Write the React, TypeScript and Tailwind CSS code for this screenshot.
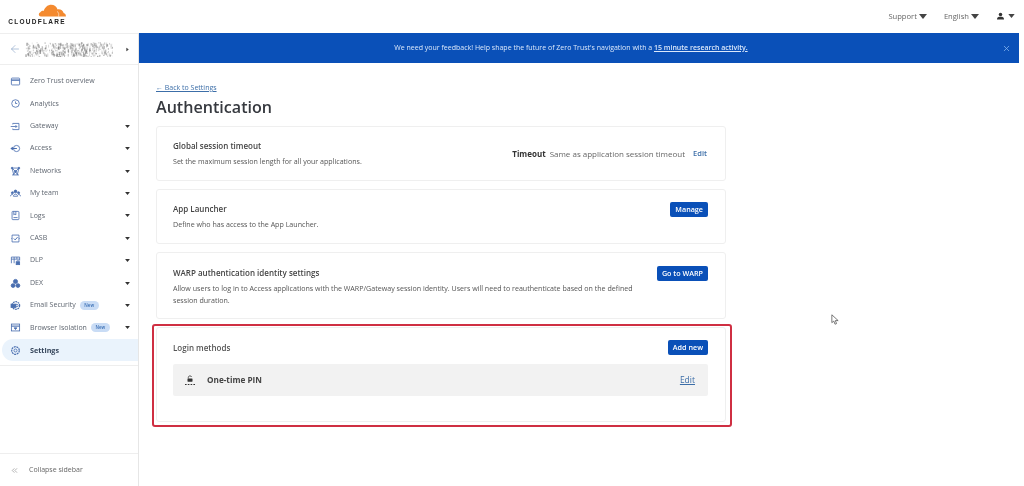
import React from "react";
import { ArrowLeft, ChevronsLeft, X } from "lucide-react";

const Caret = ({ className = "" }: { className?: string }) => (
  <svg viewBox="0 0 8 5" className={className} fill="currentColor">
    <path d="M0 0h8L4 5z" />
  </svg>
);

const icons: Record<string, React.ReactNode> = {
  overview: (
    <>
      <rect x="2" y="3" width="12" height="10" rx="1" />
      <path d="M2 6h12" strokeWidth="2" />
    </>
  ),
  analytics: (
    <>
      <circle cx="8" cy="8" r="5.5" />
      <path d="M8 5v3h2.5" />
    </>
  ),
  gateway: (
    <>
      <path d="M4 5V3.5h9v9H4V11" />
      <path d="M1 8h9M8 6l2 2-2 2" />
    </>
  ),
  access: (
    <>
      <circle cx="9.5" cy="8" r="4.5" />
      <path d="M1 8h9M4 6 2 8l2 2" strokeWidth="1.6" />
    </>
  ),
  networks: (
    <>
      <path d="M3 3h10M3 13h10M3 3l2.5 10M13 3l-2.5 10M3 3l5 5 5-5M5 13l3-5 3 5" />
      <circle cx="3" cy="3" r="1.2" fill="#4a6fb0" />
      <circle cx="13" cy="3" r="1.2" fill="#4a6fb0" />
      <circle cx="8" cy="8" r="1.4" fill="#4a6fb0" />
    </>
  ),
  team: (
    <>
      <circle cx="8" cy="5" r="2" fill="#4a6fb0" />
      <circle cx="3.5" cy="7" r="1.5" fill="#4a6fb0" />
      <circle cx="12.5" cy="7" r="1.5" fill="#4a6fb0" />
      <path d="M5 12c0-4 6-4 6 0zM.8 12c0-3 3-3 3.4-2M15.2 12c0-3-3-3-3.4-2" />
    </>
  ),
  logs: (
    <>
      <rect x="3" y="2" width="10" height="12" rx="1" />
      <path d="M5.5 2v5l1.5-1 1.500 1V2M5 11h6" />
    </>
  ),
  casb: (
    <>
      <path d="M3 5V3h10v2M3 11v2h10v-2M2 8h1M13 8h1M3 5v6M13 5v6" />
      <path d="m5.500 8 2 2 3.500-4" strokeWidth="1.400" />
    </>
  ),
  dlp: (
    <>
      <path d="M2 12V3h12v5" />
      <path d="M2 6h12M6 3v9M10 3v3" />
      <rect x="9" y="10" width="5" height="4" fill="#4a6fb0" />
      <path d="M10 10V8.500h3V10" />
    </>
  ),
  dex: (
    <>
      <circle cx="8" cy="5" r="3" fill="#4a6fb0" />
      <circle cx="4.500" cy="11" r="2.800" fill="#4a6fb0" />
      <circle cx="11.500" cy="11" r="2.800" fill="#4a6fb0" />
    </>
  ),
  email: (
    <>
      <circle cx="8.500" cy="8" r="5.500" strokeDasharray="2.500 1" strokeWidth="1.800" />
      <rect x="1.500" y="6" width="7" height="5" fill="#4a6fb0" />
      <circle cx="10" cy="8" r="1.800" />
    </>
  ),
  browser: (
    <>
      <rect x="2" y="3" width="12" height="10" />
      <path d="M2 6h12" strokeWidth="1.600" />
      <path d="M6 8.500h4L8 11z" fill="#4a6fb0" />
    </>
  ),
  settings: (
    <>
      <circle cx="8" cy="8" r="5.500" strokeDasharray="2.800 1" strokeWidth="1.800" />
      <circle cx="8" cy="8" r="2.200" />
    </>
  ),
};

const NavIcon = ({ name }: { name: string }) => (
  <svg viewBox="0 0 16 16" className="w-[11px] h-[11px] shrink-0" fill="none" stroke="#4a6fb0" strokeWidth="1.200">
    {icons[name]}
  </svg>
);

const nav = [
  { icon: "overview", label: "Zero Trust overview" },
  { icon: "analytics", label: "Analytics" },
  { icon: "gateway", label: "Gateway", caret: true },
  { icon: "access", label: "Access", caret: true },
  { icon: "networks", label: "Networks", caret: true },
  { icon: "team", label: "My team", caret: true },
  { icon: "logs", label: "Logs", caret: true },
  { icon: "casb", label: "CASB", caret: true },
  { icon: "dlp", label: "DLP", caret: true },
  { icon: "dex", label: "DEX", caret: true },
  { icon: "email", label: "Email Security", caret: true, badge: true },
  { icon: "browser", label: "Browser Isolation", caret: true, badge: true },
];

// scribbled-out account name, a small LCG keeps it stable between runs
let seed = 11;
const rnd = () => {
  seed = (seed * 1103515245 + 12345) % 2147483648;
  return seed / 2147483648;
};
const scribble = Array.from({ length: 420 }, () => ({
  x: rnd() * 88,
  y: 1 + rnd() * 14,
  w: 0.6 + rnd(),
  h: 0.8 + rnd() * 2.4,
  o: 0.12 + rnd() * 0.5,
}));

function Card({ className = "", children }: { className?: string; children: React.ReactNode }) {
  return (
    <div className={`border border-[#efefef] rounded-[3px] bg-white pl-[16px] pr-[17px] ${className}`}>{children}</div>
  );
}

function Btn({ children }: { children: React.ReactNode }) {
  return (
    <button className="block h-[15px] px-[5px] rounded-[2px] bg-[#0a50b8] text-white text-[7.200px] font-semibold leading-none">
      {children}
    </button>
  );
}

export default function App() {
  return (
    <div className="w-[1024px] h-[486px] overflow-hidden bg-white text-[#555] flex flex-col blur-[0.35px] font-['Open_Sans',sans-serif]">
      <header className="h-[33px] shrink-0 flex items-center justify-between">
        <div className="ml-[8px] mt-[-5px] flex flex-col items-end w-[58px]">
          <svg viewBox="0 0 30 14" className="w-[28px] h-[13px] mb-[1px]">
            <path
              d="M3 13.500c-2.500 0-3-3.500-.5-4.500C3 7.500 5 7 6 7.500 7.500 3 11 .8 14 .8c3.500 0 6 2.200 7 5 3-.5 6 1.200 6.500 4 1.500.4 2.500 1.500 2.500 3.700z"
              fill="#f48a2f"
            />
            <path d="M22 13.500c.6-2.500.3-4.500-1.500-5.500" stroke="#fff" strokeWidth="0.600" fill="none" />
          </svg>
          <span className="text-[6.500px] font-['Liberation_Sans',sans-serif] font-bold tracking-[1.300px] leading-[7px] text-[#222]">
            CLOUDFLARE
          </span>
        </div>
        <div className="flex items-center text-[7.600px] text-[#666] mr-[9px]">
          <span>Support</span>
          <Caret className="w-[8px] h-[5px] ml-[2px] text-[#444]" />
          <span className="ml-[17px]">English</span>
          <Caret className="w-[8px] h-[5px] ml-[2px] text-[#444]" />
          <svg viewBox="0 0 10 10" className="w-[7px] h-[8px] ml-[18px] text-[#333]" fill="currentColor">
            <circle cx="5" cy="2.800" r="2.500" />
            <path d="M0 10c0-3.500 2-4 5-4s5 .5 5 4z" />
          </svg>
          <Caret className="w-[7px] h-[4px] ml-[4px] text-[#444]" />
        </div>
      </header>

      <div className="flex flex-1 min-h-0">
        <aside className="w-[139px] shrink-0 border-r border-[#e6e6e6] flex flex-col">
          <div className="h-[32px] shrink-0 border-y border-[#eeeeee] flex items-center pl-[9px] pr-[9px]">
            <ArrowLeft className="w-[12px] h-[12px] shrink-0 text-[#8aa4c8]" strokeWidth={1.300} />
            <svg viewBox="0 0 88 16" className="w-[88px] h-[16px] ml-[4px] shrink-0">
              {scribble.map((d, i) => (
                <rect key={i} x={d.x} y={d.y} width={d.w} height={d.h} fill="#777" opacity={d.o} />
              ))}
            </svg>
            <Caret className="w-[3px] h-[5px] ml-auto -rotate-90 scale-[1.300] text-[#444]" />
          </div>

          <nav className="pt-[5.300px] flex-1 border-b border-[#eeeeee] flex flex-col">
            {nav.map((n) => (
              <div key={n.label} className="h-[22.400px] shrink-0 flex items-center pl-[10px] pr-[8.500px] text-[7px] text-[#5f6670]">
                <NavIcon name={n.icon} />
                <span className="ml-[9px]">{n.label}</span>
                {n.badge && (
                  <span className="ml-[4px] w-[19px] text-center rounded-full bg-[#c9dcf5] text-[#3b6fb5] text-[4.500px] leading-[9px] font-semibold">
                    New
                  </span>
                )}
                {n.caret && <Caret className="w-[5px] h-[3px] ml-auto text-[#333]" />}
              </div>
            ))}
            <div className="h-[22.400px] shrink-0 ml-[2px] flex items-center pl-[8px] bg-[#eaf3fc] rounded-l-full text-[7.200px] font-bold text-[#36465c]">
              <NavIcon name="settings" />
              <span className="ml-[9px]">Settings</span>
            </div>
            <div className="h-[5px] border-b border-[#eeeeee]" />
          </nav>
          <div className="h-[32px] shrink-0 flex items-center pl-[10px] text-[7px] text-[#666]">
            <ChevronsLeft className="w-[9px] h-[9px] text-[#999]" />
            <span className="ml-[10px]">Collapse sidebar</span>
          </div>
        </aside>

        <main className="flex-1 min-w-0 flex flex-col">
          <div className="h-[30px] shrink-0 mr-[5px] bg-[#0a50b8] flex items-center text-[7px] text-[#dbe8fb] relative justify-center pr-[16px]">
            <span>
              We need your feedback! Help shape the future of Zero Trust's navigation with a{" "}
              <span className="underline font-semibold">15 minute research activity.</span>
            </span>
            <X className="absolute right-[8px] top-[10.500px] w-[9px] h-[9px] text-[#8ab8f0]" strokeWidth={2} />
          </div>

          <div className="pl-[17px] pt-[19px] w-[587px]">
            <div className="text-[7px] leading-[12px] text-[#3c6ea8] underline">← Back to Settings</div>
            <h1 className="text-[16.100px] leading-[24px] mt-[1px] font-semibold text-[#36393f]">Authentication</h1>

            <div className="flex flex-col gap-[8px] mt-[7px]">
              <Card className="h-[55px] flex items-center justify-between">
                <div>
                  <div className="text-[8px] font-semibold text-[#444]">Global session timeout</div>
                  <div className="text-[7.100px] mt-[4px] text-[#555]">Set the maximum session length for all your applications.</div>
                </div>
                <div className="flex items-center text-[8px] mr-[1px]">
                  <span className="font-bold text-[#333]">Timeout</span>
                  <span className="ml-[4px] text-[#666]">Same as application session timeout</span>
                  <span className="ml-[8px] text-[7.500px] font-semibold text-[#3c6ea8]">Edit</span>
                </div>
              </Card>

              <Card className="h-[55px] flex items-center justify-between">
                <div>
                  <div className="text-[8px] font-semibold text-[#444]">App Launcher</div>
                  <div className="text-[7.100px] mt-[4px] text-[#555]">Define who has access to the App Launcher.</div>
                </div>
                <div className="self-start mt-[12px]">
                  <Btn>Manage</Btn>
                </div>
              </Card>

              <Card className="h-[67px] pt-[13px]">
                <div className="flex items-center justify-between">
                  <div className="text-[8px] font-semibold text-[#444] -mt-[2px]">WARP authentication identity settings</div>
                  <Btn>Go to WARP</Btn>
                </div>
                <p className="text-[7.100px] leading-[11.500px] mt-[2px] text-[#555] w-[480px]">
                  Allow users to log in to Access applications with the WARP/Gateway session identity. Users will need to reauthenticate based on the defined session duration.
                </p>
              </Card>

              <Card className="h-[95px] pt-[12px] relative">
                <div className="flex items-center justify-between">
                  <div className="text-[8px] font-semibold text-[#555]">Login methods</div>
                  <Btn>Add new</Btn>
                </div>
                <div className="mt-[9px] h-[32px] bg-[#f2f2f2] rounded-[2px] flex items-center pl-[11px] pr-[13px]">
                  <svg viewBox="0 0 12 12" className="w-[12px] h-[13px] text-[#333]" fill="currentColor">
                    <path d="M4.300 4V3a1.700 1.700 0 0 1 3.300-.5" fill="none" stroke="currentColor" strokeWidth="0.800" />
                    <rect x="3.500" y="4" width="5" height="3.200" rx="0.400" />
                    <path d="M1 10.500h1.600v-.9H1zM3.800 10.500h1.600v-.9H3.800zM6.600 10.500h1.600v-.9H6.600zM9.400 10.500H11v-.9H9.400z" />
                  </svg>
                  <span className="ml-[11px] text-[8.200px] font-bold text-[#444]">One-time PIN</span>
                  <span className="ml-auto text-[8.500px] text-[#3c6ea8] underline">Edit</span>
                </div>
                {/* red highlight drawn over the card */}
                <div className="absolute -left-[5px] -top-[4px] w-[580px] h-[103px] border-2 border-[#cf2f42] rounded-[3px]" />
              </Card>
            </div>
          </div>
          {/* mouse pointer */}
          <svg viewBox="0 0 10 14" className="absolute left-[831px] top-[314px] w-[8px] h-[11px]" fill="#fff" stroke="#555" strokeWidth="1">
            <path d="M1 1v10l2.500-2 1.500 4 2-.8-1.600-3.800H9z" />
          </svg>
        </main>
      </div>
    </div>
  );
}
